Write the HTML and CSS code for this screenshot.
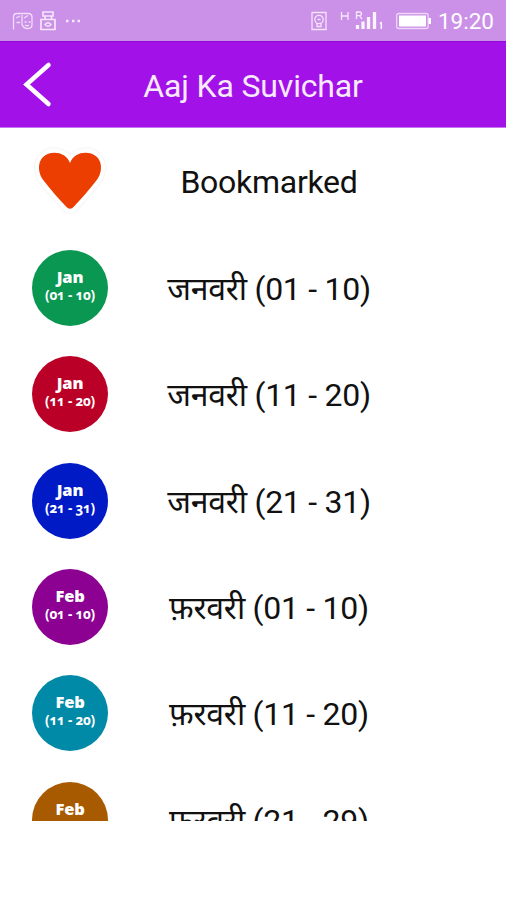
FILE: index.html
```html
<!DOCTYPE html>
<html lang="hi">
<head>
  <meta charset="UTF-8">
  <meta name="viewport" content="width=device-width, initial-scale=1.0">
  <title>Aaj Ka Suvichar</title>
  <link rel="stylesheet" href="styles.css">
</head>
<body>
  <div class="screen">

    <!-- status bar -->
    <div class="status-bar">
      <div class="status-left">
        <svg width="84" height="24" viewBox="0 0 84 24" fill="none" stroke="#f6e6fc" stroke-width="1.3">
          <path d="M13.500 20.500V8q0-3.500 3.500-3.500h11q4 0 4 4v7q0 4-4 4h-2q-3-1-4-4V6M16 9l4-2M16.500 13.500h3.500M24 9l4-2.500M24.500 13h2M28.500 13h2M25 16q2 1.500 4 0" opacity=".9"/>
          <path d="M43 3h10v4H43zM45 7v3M51.500 7v3M41 10.500h14V20.500H41z" stroke-width="1.700"/>
          <path d="M45 15.500q3-3.500 6 0q-3 3.500-6 0z"/>
          <path d="M66 12h2.500M72 12h2.500M77.500 12h2.500" stroke-width="2.400"/>
        </svg>
      </div>
      <div class="status-right">
        <svg width="120" height="24" viewBox="312 9 120 24" fill="none" stroke="#fbf3fe" stroke-width="1.3">
          <path d="M313 12.500h14v17h-14z" opacity=".85"/>
          <circle cx="320" cy="19.500" r="4.200" opacity=".85"/>
          <path d="M318.500 19.500h3M318 23.500v3h4v-3" opacity=".85"/>
          <path d="M342.500 12v8M349 12v8M342.500 16h6.500M357.500 19v-7h3q2 0 2 1.800T360.500 15.600h-3M360.500 15.600l2.500 3.400" stroke-width="1.300" opacity=".9"/>
          <path d="M358.500 25v4M364 21.500v7.500M369.500 17v12M375.500 12v17" stroke-width="3.300"/>
          <path d="M380.800 23.500l1.500-.7V29" stroke-width="1.500"/>
          <rect x="397.700" y="13.500" width="31.500" height="15" rx="2" opacity=".7"/>
          <path d="M400 15.500h27v11h-27zM429.500 18h2.500v6h-2.500z" fill="#fff" stroke="none"/>
        </svg>
        <span class="clock">19:20</span>
      </div>
    </div>

    <!-- title bar -->
    <header class="title-bar">
      <svg class="back" width="30" height="48" viewBox="0 0 30 48">
        <path d="M26.500 4L4.500 23.500l22 19.500"/>
      </svg>
      <h1>Aaj Ka Suvichar</h1>
    </header>

    <!-- list -->
    <ul class="list">
      <li class="row">
        <svg class="heart" width="76" height="76" viewBox="32 143 76 76">
          <path d="M70 163C74 151 90 150 97 157C103 163 102 174 96 181C90 189 81 199 74 206.500Q70 211 66 206.500C59 199 50 189 44 181C38 174 37 163 43 157C50 150 66 151 70 163z"/>
        </svg>
        <span class="label">Bookmarked</span>
      </li>
      <li class="row">
        <div class="badge green"><b>Jan</b><small>(01 - 10)</small></div>
        <span class="label">जनवरी (01 - 10)</span>
      </li>
      <li class="row">
        <div class="badge red"><b>Jan</b><small>(11 - 20)</small></div>
        <span class="label">जनवरी (11 - 20)</span>
      </li>
      <li class="row">
        <div class="badge blue"><b>Jan</b><small>(21 - 31)</small></div>
        <span class="label">जनवरी (21 - 31)</span>
      </li>
      <li class="row">
        <div class="badge purple"><b>Feb</b><small>(01 - 10)</small></div>
        <span class="label">फ़रवरी (01 - 10)</span>
      </li>
      <li class="row">
        <div class="badge teal"><b>Feb</b><small>(11 - 20)</small></div>
        <span class="label">फ़रवरी (11 - 20)</span>
      </li>
      <li class="row">
        <div class="badge brown"><b>Feb</b><small>(21 - 29)</small></div>
        <span class="label">फ़रवरी (21 - 29)</span>
      </li>
    </ul>

  </div>
</body>
</html>
```
FILE: styles.css
```css
* {
  box-sizing: border-box;
  margin: 0;
  padding: 0;
}

body {
  background: #fff;
  font-family: Roboto, "Noto Sans", sans-serif;
  overflow: hidden;
}

.screen {
  width: 506px;
  height: 821px;
  overflow: hidden;
}

.status-bar {
  height: 41px;
  display: flex;
  justify-content: space-between;
  align-items: center;
  padding-right: 12px;
  background: #cb90e8;
}

.status-left,
.status-right {
  display: flex;
  align-items: center;
}

.status-right {
  gap: 7px;
}

.clock {
  color: #fff;
  font-size: 22.5px;
  line-height: 26px;
}

.title-bar {
  height: 87px;
  display: grid;
  grid-template-columns: 30px 1fr 30px;
  align-items: center;
  padding: 0 22px;
  background: #a211e8;
  border-top: 1px solid #9308d4;
  border-bottom: 1px solid #c878ef;
}

.back path {
  fill: none;
  stroke: #fff;
  stroke-width: 4.5;
  stroke-linecap: round;
}

.title-bar h1 {
  color: #f8eafd;
  font-size: 32px;
  font-weight: 400;
  letter-spacing: -0.15px;
  text-align: center;
  line-height: 40px;
  padding-top: 2px;
}

.list {
  list-style: none;
}

.row {
  height: 106.45px;
  display: flex;
  align-items: center;
  padding-left: 32px;
}

.heart {
  fill: #eb3e00;
  stroke: #fff;
  stroke-width: 8;
  paint-order: stroke;
  filter: drop-shadow(0 0 1px rgba(0, 0, 0, 0.1));
}

.badge {
  width: 76px;
  height: 76px;
  border-radius: 50%;
  display: flex;
  flex-direction: column;
  align-items: center;
  padding-top: 17px;
  color: #fff;
  font-family: "Open Sans", sans-serif;
  font-weight: 700;
}

.badge b {
  font-size: 16.5px;
  letter-spacing: -0.2px;
  line-height: 19px;
}

.badge small {
  font-size: 13.5px;
  letter-spacing: -0.2px;
  line-height: 19px;
  font-variant-numeric: oldstyle-nums;
  white-space: nowrap;
}

.green { background: #099752; }
.red { background: #bb0028; }
.blue { background: #001ac6; }
.purple { background: #8c0092; }
.teal { background: #008aa8; }
.brown { background: #a75a00; }

.label {
  width: 322px;
  padding-top: 2px;
  color: #111;
  font-size: 32px;
  letter-spacing: -0.27px;
  line-height: 44px;
  text-align: center;
  white-space: nowrap;
}
```
